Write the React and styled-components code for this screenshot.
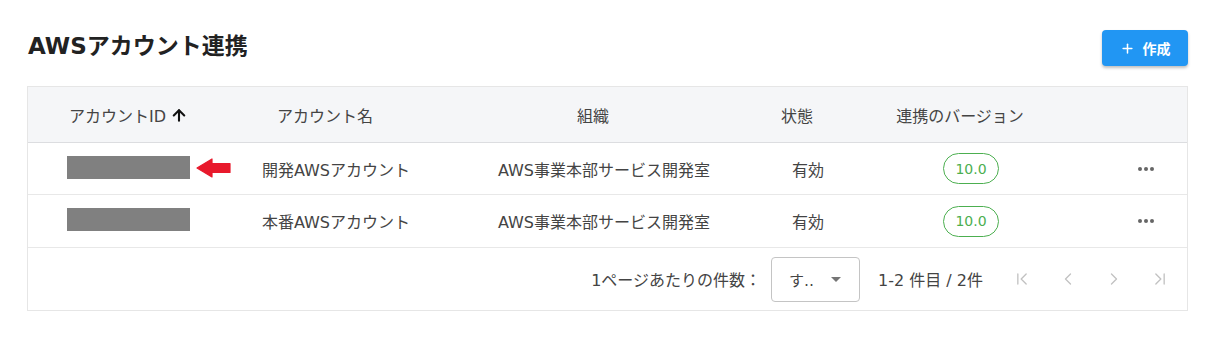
import React from "react";
import styled, { createGlobalStyle } from "styled-components";
import { ArrowUp, ChevronFirst, ChevronLeft, ChevronRight, ChevronLast, Plus } from "lucide-react";

const GlobalStyle = createGlobalStyle`
  html, body {
    margin: 0;
    padding: 0;
    background: #fff;
  }
  body {
    font-family: "DejaVu Sans", "Noto Sans CJK JP", sans-serif;
    color: #444;
  }
`;

const Page = styled.div`
  padding: 30px 30px 0 27px;
`;

const TitleBar = styled.div`
  display: flex;
  align-items: center;
  justify-content: space-between;
  height: 36px;
  margin-bottom: 20px;
`;

const Title = styled.h1`
  margin: -4px 0 0 1px;
  font-size: 23px;
  font-weight: bold;
  color: #222;
  line-height: 1;
`;

const CreateButton = styled.button`
  display: flex;
  align-items: center;
  gap: 8px;
  height: 36px;
  width: 86px;
  justify-content: center;
  border: none;
  border-radius: 4px;
  background: #2196f3;
  color: #fff;
  font-family: "DejaVu Sans", "Noto Sans CJK JP", sans-serif;
  font-size: 14px;
  font-weight: bold;
  box-shadow: 0 2px 3px rgba(0, 0, 0, 0.25);
  padding: 0;
`;

const Table = styled.div`
  border: 1px solid #e6e6e6;
`;

const Row = styled.div`
  display: grid;
  grid-template-columns: 201px 214px 322px 86px 240px 1fr;
  align-items: center;
  height: ${(p) => p.$h}px;
  background: ${(p) => (p.$head ? "#f5f6f8" : "#fff")};
  border-bottom: 1px solid ${(p) => (p.$head ? "#dcdde0" : "#e8e8e8")};
  font-size: 16px;
`;

const HeadCell = styled.div`
  display: flex;
  align-items: center;
  justify-content: center;
  gap: 4px;
  color: #444;
`;

const SortSlot = styled.span`
  display: flex;
  width: 18px;
  height: 18px;
  color: #111;
  visibility: ${(p) => (p.$show ? "visible" : "hidden")};
`;

const Cell = styled.div`
  position: relative;
  display: flex;
  align-items: center;
  justify-content: center;
  color: #444;
`;

const Masked = styled.div`
  width: 123px;
  height: 23px;
  background: #808080;
  margin-top: -3px;
`;

const Pointer = styled.svg`
  position: absolute;
  left: 168px;
  top: 50%;
  margin-top: -12px;
`;

const Badge = styled.span`
  display: inline-flex;
  align-items: center;
  justify-content: center;
  width: 54px;
  height: 29px;
  border: 1px solid #4caf50;
  border-radius: 16px;
  color: #4caf50;
  font-size: 14px;
`;

const Dots = styled.div`
  display: flex;
  gap: 2px;
  margin-left: 14px;
  span {
    width: 4px;
    height: 4px;
    border-radius: 50%;
    background: #666;
  }
`;

const Footer = styled.div`
  display: flex;
  align-items: center;
  justify-content: flex-end;
  height: 62px;
  padding-right: 7px;
  font-size: 16px;
  color: #444;
`;

const Select = styled.div`
  display: flex;
  align-items: center;
  justify-content: space-between;
  box-sizing: border-box;
  width: 89px;
  height: 45px;
  margin: 0 18px 0 10px;
  padding: 0 18px 0 17px;
  border: 1px solid #c4c4c4;
  border-radius: 4px;
  font-size: 15px;
`;

const Caret = styled.span`
  width: 0;
  height: 0;
  border-left: 5px solid transparent;
  border-right: 5px solid transparent;
  border-top: 5px solid #757575;
`;

const PagerButtons = styled.div`
  display: flex;
  gap: 6px;
  margin-left: 19px;
`;

const PagerButton = styled.span`
  display: flex;
  align-items: center;
  justify-content: center;
  width: 40px;
  height: 40px;
  color: #c2c2c2;
`;

const columns = ["アカウントID", "アカウント名", "組織", "状態", "連携のバージョン", ""];

const rows = [
  { name: "開発AWSアカウント", org: "AWS事業本部サービス開発室", status: "有効", version: "10.0", flagged: true },
  { name: "本番AWSアカウント", org: "AWS事業本部サービス開発室", status: "有効", version: "10.0" },
];

function RedArrow() {
  return (
    <Pointer width="36" height="22" viewBox="0 0 36 22">
      <polygon
        points="1,11 16,2 16,6.5 34,6.5 34,15.5 16,15.5 16,20"
        fill="#e8192c"
        stroke="#e8192c"
        strokeLinejoin="round"
        strokeWidth="1.2"
      />
    </Pointer>
  );
}

export default function App() {
  return (
    <Page>
      <GlobalStyle />
      <TitleBar>
        <Title>AWSアカウント連携</Title>
        <CreateButton>
          <Plus size={15} strokeWidth={2.4} />
          作成
        </CreateButton>
      </TitleBar>
      <Table>
        <Row $head $h={55}>
          {columns.map((c, i) => (
            <HeadCell key={i}>
              {c}
              {c && (
                <SortSlot $show={i === 0}>
                  <ArrowUp size={19} strokeWidth={2.8} />
                </SortSlot>
              )}
            </HeadCell>
          ))}
        </Row>
        {rows.map((r, i) => (
          <Row key={i} $h={i === 0 ? 51 : 52}>
            <Cell>
              <Masked />
              {r.flagged && <RedArrow />}
            </Cell>
            <Cell>{r.name}</Cell>
            <Cell>{r.org}</Cell>
            <Cell>{r.status}</Cell>
            <Cell>
              <Badge>{r.version}</Badge>
            </Cell>
            <Cell>
              <Dots>
                <span />
                <span />
                <span />
              </Dots>
            </Cell>
          </Row>
        ))}
        <Footer>
          1ページあたりの件数：
          <Select>
            す‥
            <Caret />
          </Select>
          1-2 件目 / 2件
          <PagerButtons>
            <PagerButton><ChevronFirst size={20} strokeWidth={1.6} /></PagerButton>
            <PagerButton><ChevronLeft size={20} strokeWidth={1.6} /></PagerButton>
            <PagerButton><ChevronRight size={20} strokeWidth={1.6} /></PagerButton>
            <PagerButton><ChevronLast size={20} strokeWidth={1.6} /></PagerButton>
          </PagerButtons>
        </Footer>
      </Table>
    </Page>
  );
}
